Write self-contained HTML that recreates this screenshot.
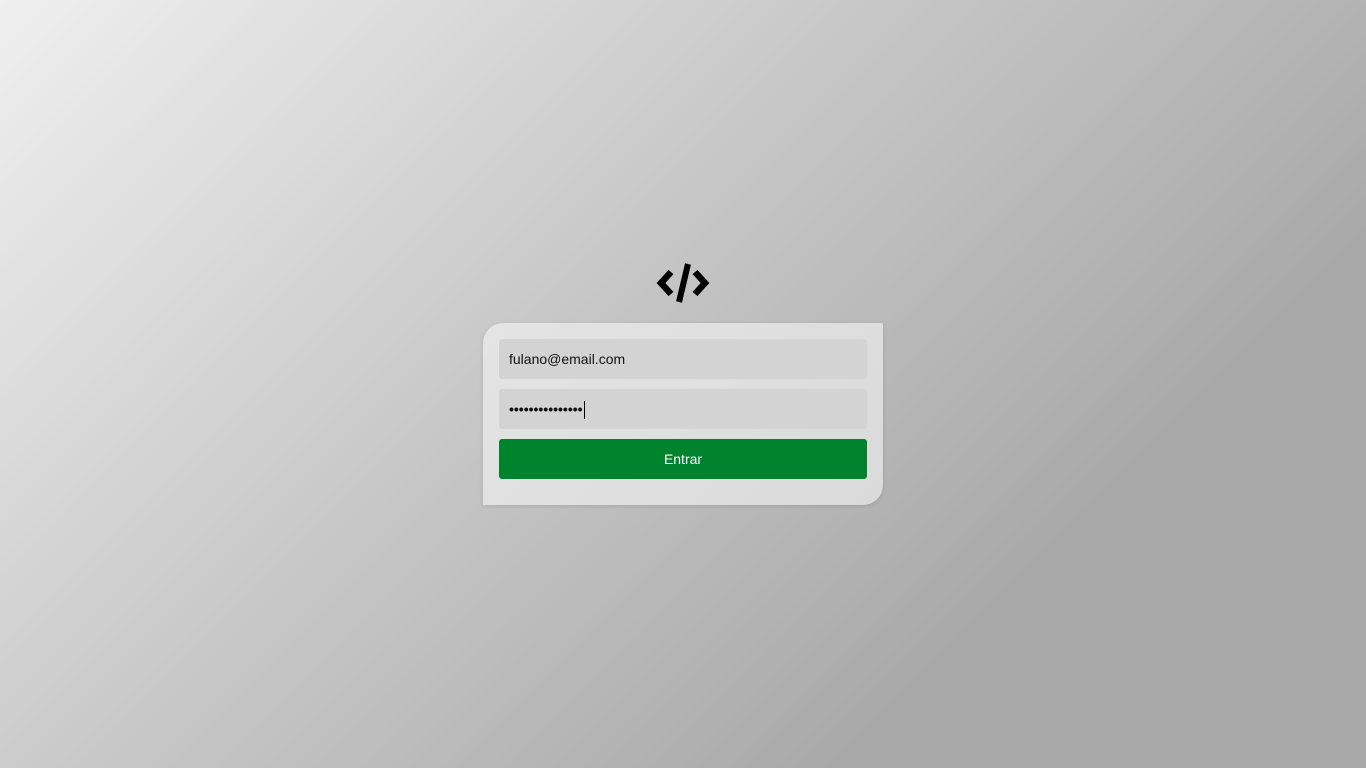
<!DOCTYPE html>
<html><head><meta charset="utf-8"><style>
html,body{margin:0;height:100%}
body{width:1366px;height:768px;background:linear-gradient(135deg,#efefef 0%,#c8c8c8 40%,#a9a9a9 75%,#a9a9a9 100%);font-family:"Liberation Sans",sans-serif;position:relative;overflow:hidden}
.card{position:absolute;left:483px;top:323px;width:400px;height:182px;background:linear-gradient(135deg,#e4e4e4,#dadada);border-radius:20px 0 20px 0;box-shadow:0 1px 4px rgba(0,0,0,.12)}
.in{position:absolute;left:16px;width:368px;height:40px;background:#d3d3d3;border-radius:3px;font-size:14px;line-height:40px;padding-left:10px;box-sizing:border-box;color:#111}
.btn{position:absolute;left:16px;top:116px;width:368px;height:40px;background:#00832d;border-radius:3px;color:#fff;text-align:center;line-height:40px;font-size:14px}
</style></head><body>
<svg style="position:absolute;left:650px;top:258px" width="66" height="50" viewBox="0 0 66 50">
<polyline points="21,14 11,25 21,36" fill="none" stroke="#000" stroke-width="6.5"/>
<polyline points="45,14 55,25 45,36" fill="none" stroke="#000" stroke-width="6.5"/>
<line x1="38" y1="6" x2="29" y2="44" stroke="#000" stroke-width="6"/>
</svg>
<div class="card">
<div class="in" style="top:16px">fulano@email.com</div>
<div class="in" style="top:66px;letter-spacing:0px;font-weight:bold">•••••••••••••••<span style="display:inline-block;width:1px;height:18px;background:#000;vertical-align:middle;margin-left:1px"></span></div>
<div class="btn">Entrar</div>
</div>
</body></html>
